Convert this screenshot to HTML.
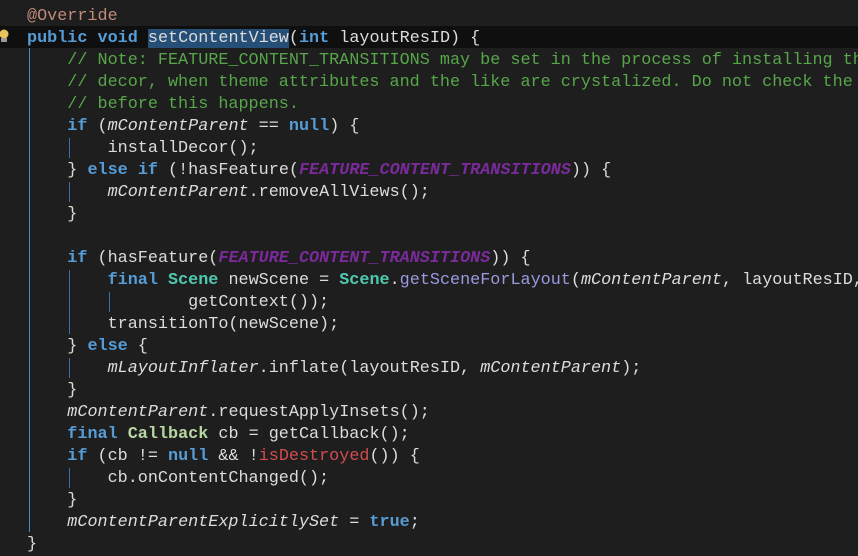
<!DOCTYPE html>
<html><head><style>
body{margin:0;width:858px;height:555px;background:#1e1e1e;overflow:hidden;position:relative;font-family:"Liberation Mono",monospace;font-size:16.8px;color:#dcdcdc}
.l{position:absolute;left:27px;height:22px;line-height:22px;white-space:pre}
.k{color:#569cd6;font-weight:bold}.c{color:#57a64a}.a{color:#c08a7a}.p{color:#7a2a9a;font-style:italic;font-weight:bold}.i{font-style:italic}
.t{color:#4ec9b0;font-weight:bold}.cb{color:#b8d7a3;font-weight:bold}.m{color:#9a9ae0}.r{color:#d14c4c}
.sel{background:#264f78}
.g{position:absolute;width:1px;background:#4a86c8}
.g2{position:absolute;width:1px;background:#3a70b0}
</style></head><body>
<div style="position:absolute;left:0;top:26px;width:858px;height:22px;background:#0f0f0f"></div>
<div class="g" style="left:29px;top:48px;height:484px"></div>
<div class="g2" style="left:69px;top:138px;height:20px"></div>
<div class="g2" style="left:69px;top:182px;height:20px"></div>
<div class="g2" style="left:69px;top:270px;height:64px"></div>
<div class="g2" style="left:109px;top:292px;height:20px"></div>
<div class="g2" style="left:69px;top:358px;height:20px"></div>
<div class="g2" style="left:69px;top:468px;height:20px"></div>
<svg style="position:absolute;left:0;top:28px" width="10" height="16"><circle cx="4" cy="6" r="4.5" fill="#e8c35a"/><rect x="1" y="10" width="6" height="4" fill="#9a9a9a"/></svg>
<div class="l" style="top:6px"><span class="a">@Override</span></div>
<div class="l" style="top:28px"><span class="k">public</span> <span class="k">void</span> <span class="sel">setContentView</span>(<span class="k">int</span> layoutResID) {</div>
<div class="l c" style="top:50px">    // Note: FEATURE_CONTENT_TRANSITIONS may be set in the process of installing the</div>
<div class="l c" style="top:72px">    // decor, when theme attributes and the like are crystalized. Do not check the f</div>
<div class="l c" style="top:94px">    // before this happens.</div>
<div class="l" style="top:116px">    <span class="k">if</span> (<span class="i">mContentParent</span> == <span class="k">null</span>) {</div>
<div class="l" style="top:138px">        installDecor();</div>
<div class="l" style="top:160px">    } <span class="k">else</span> <span class="k">if</span> (!hasFeature(<span class="p">FEATURE_CONTENT_TRANSITIONS</span>)) {</div>
<div class="l" style="top:182px">        <span class="i">mContentParent</span>.removeAllViews();</div>
<div class="l" style="top:204px">    }</div>
<div class="l" style="top:248px">    <span class="k">if</span> (hasFeature(<span class="p">FEATURE_CONTENT_TRANSITIONS</span>)) {</div>
<div class="l" style="top:270px">        <span class="k">final</span> <span class="t">Scene</span> newScene = <span class="t">Scene</span>.<span class="m">getSceneForLayout</span>(<span class="i">mContentParent</span>, layoutResID,</div>
<div class="l" style="top:292px">                getContext());</div>
<div class="l" style="top:314px">        transitionTo(newScene);</div>
<div class="l" style="top:336px">    } <span class="k">else</span> {</div>
<div class="l" style="top:358px">        <span class="i">mLayoutInflater</span>.inflate(layoutResID, <span class="i">mContentParent</span>);</div>
<div class="l" style="top:380px">    }</div>
<div class="l" style="top:402px">    <span class="i">mContentParent</span>.requestApplyInsets();</div>
<div class="l" style="top:424px">    <span class="k">final</span> <span class="cb">Callback</span> cb = getCallback();</div>
<div class="l" style="top:446px">    <span class="k">if</span> (cb != <span class="k">null</span> &amp;&amp; !<span class="r">isDestroyed</span>()) {</div>
<div class="l" style="top:468px">        cb.onContentChanged();</div>
<div class="l" style="top:490px">    }</div>
<div class="l" style="top:512px">    <span class="i">mContentParentExplicitlySet</span> = <span class="k">true</span>;</div>
<div class="l" style="top:534px">}</div>
</body></html>
